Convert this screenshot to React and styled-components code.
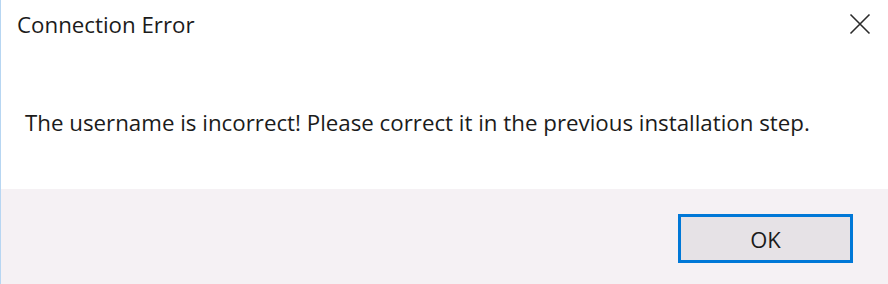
import styled, { createGlobalStyle } from 'styled-components'

const GlobalStyle = createGlobalStyle`
  html, body {
    margin: 0;
    padding: 0;
    background: #ffffff;
  }
`

const Dialog = () => {
  return (
    <Window>
      <GlobalStyle />
      <TitleBar>
        <Title>Connection Error</Title>
        <CloseButton aria-label="Close">
          <svg width="22" height="22" viewBox="0 0 22 22">
            <path d="M1.5 1.5 L20.5 20.5 M20.5 1.5 L1.5 20.5" stroke="#2b2b2b" strokeWidth="1.6" fill="none" />
          </svg>
        </CloseButton>
      </TitleBar>
      <Content>
        <Message>The username is incorrect! Please correct it in the previous installation step.</Message>
      </Content>
      <Footer>
        <OkButton>OK</OkButton>
      </Footer>
    </Window>
  )
}

const Window = styled.div`
  width: 888px;
  height: 284px;
  box-sizing: border-box;
  border-left: 1px solid #b7d6f2;
  display: flex;
  flex-direction: column;
  font-family: 'Open Sans', 'Noto Sans', sans-serif;
  color: #1b1b1b;
  background: #ffffff;
`

const TitleBar = styled.header`
  height: 48px;
  display: flex;
  align-items: center;
  justify-content: space-between;
  padding: 0 17px 0 16px;
`

const Title = styled.h1`
  margin: 0;
  font-size: 22.3px;
  font-weight: 400;
`

const CloseButton = styled.button`
  border: none;
  background: transparent;
  padding: 0;
  display: flex;
  width: 22px;
  height: 22px;
`

const Content = styled.section`
  height: 141px;
  box-sizing: border-box;
  padding: 59px 0 0 24px;
`

const Message = styled.p`
  margin: 0;
  font-size: 22.3px;
`

const Footer = styled.footer`
  flex: 1;
  background: #f5f1f4;
  display: flex;
  justify-content: flex-end;
  align-items: flex-start;
  padding: 25px 35px 0 0;
`

const OkButton = styled.button`
  width: 175px;
  height: 49px;
  box-sizing: border-box;
  border: 3px solid #0078d7;
  background: #e6e2e6;
  font-family: 'Open Sans', 'Noto Sans', sans-serif;
  font-size: 22px;
  color: #1b1b1b;
  padding: 0;
`

export default Dialog
